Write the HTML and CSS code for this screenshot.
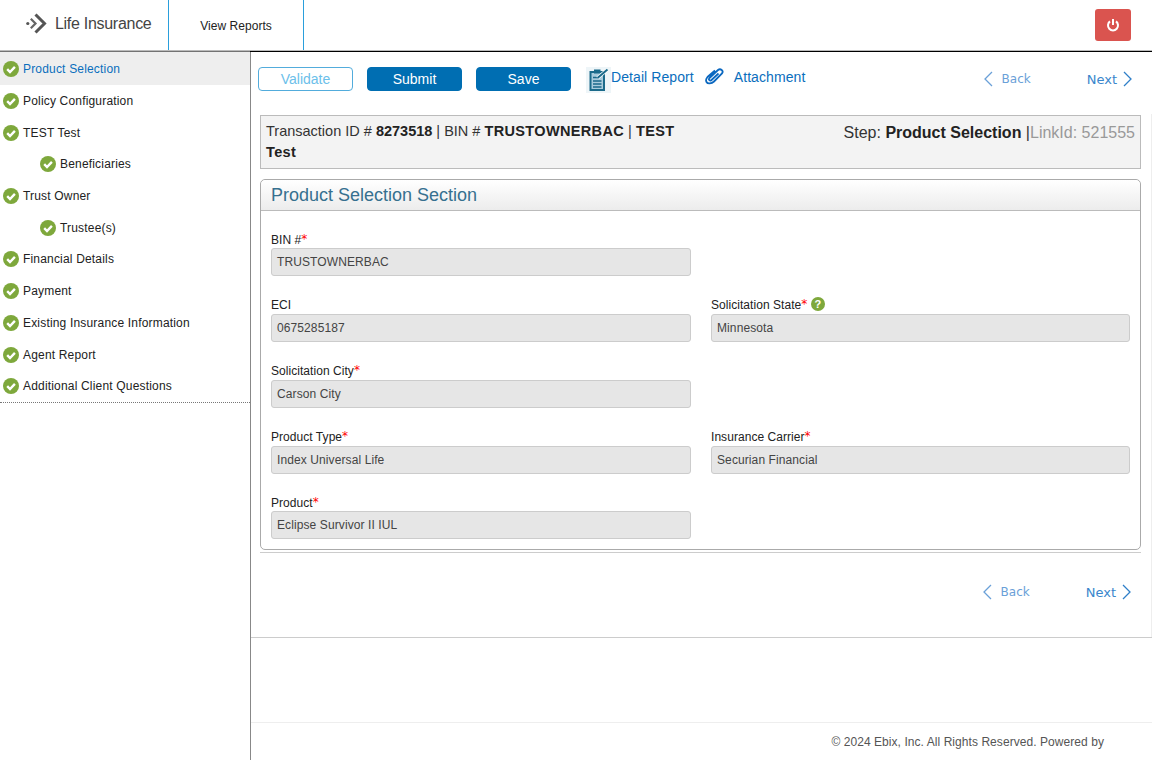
FILE: index.html
```html
<!DOCTYPE html>
<html lang="en">
<head>
    <meta charset="UTF-8">
    <title>Life Insurance</title>
    <link rel="stylesheet" href="styles.css">
</head>
<body>
    <svg width="0" height="0" class="defs">
        <symbol id="check" viewBox="0 0 16 16">
            <circle cx="8" cy="8" r="8" fill="#7ea83c"/>
            <path d="M4.2 8.2 7 11 11.9 5.9" fill="none" stroke="#fff" stroke-width="2.4"/>
        </symbol>
    </svg>

    <header class="topbar">
        <div class="logo">
            <svg width="24" height="24" viewBox="0 0 24 24">
                <circle cx="2.800" cy="11.500" r="1.600" fill="#555"/>
                <path d="M5.800 6.800 10.500 11.500 5.800 16.200" fill="none" stroke="#666" stroke-width="2.200"/>
                <path d="M10.500 2.500 19.500 11.500 10.500 20.500" fill="none" stroke="#555" stroke-width="3"/>
            </svg>
            <span>Life Insurance</span>
        </div>
        <div class="top-link">View Reports</div>
        <button class="power">
            <svg width="14" height="14" viewBox="0 0 14 14">
                <path d="M4 3.4a5 5 0 1 0 6 0" fill="none" stroke="#fff" stroke-width="2"/>
                <path d="M7 1v6" stroke="#fff" stroke-width="2"/>
            </svg>
        </button>
    </header>

    <div class="layout">
        <nav class="sidebar">
            <ul class="steps">
                <li class="step active"><svg class="tick"><use href="#check"/></svg>Product Selection</li>
                <li class="step"><svg class="tick"><use href="#check"/></svg>Policy Configuration</li>
                <li class="step"><svg class="tick"><use href="#check"/></svg>TEST Test</li>
                <li class="step sub"><svg class="tick"><use href="#check"/></svg>Beneficiaries</li>
                <li class="step"><svg class="tick"><use href="#check"/></svg>Trust Owner</li>
                <li class="step sub"><svg class="tick"><use href="#check"/></svg>Trustee(s)</li>
                <li class="step"><svg class="tick"><use href="#check"/></svg>Financial Details</li>
                <li class="step"><svg class="tick"><use href="#check"/></svg>Payment</li>
                <li class="step"><svg class="tick"><use href="#check"/></svg>Existing Insurance Information</li>
                <li class="step"><svg class="tick"><use href="#check"/></svg>Agent Report</li>
                <li class="step"><svg class="tick"><use href="#check"/></svg>Additional Client Questions</li>
            </ul>
        </nav>

        <main class="main">
            <div class="content">
                <div class="toolbar">
                    <button class="btn btn-outline">Validate</button>
                    <button class="btn">Submit</button>
                    <button class="btn">Save</button>
                    <a class="tool-link report">
                        <svg width="25" height="26" viewBox="0 0 25 26" class="tool-icon">
                            <rect width="25" height="26" fill="#eef5f8"/>
                            <rect x="4.500" y="5" width="13.500" height="18" fill="#a9cbdc" stroke="#1b6a8a" stroke-width="2"/>
                            <rect x="8" y="2.500" width="6.500" height="4" fill="#1b6a8a"/>
                            <path d="M7 10.500h6M7 14h8.500M7 17h8.500M7 20h8.500" stroke="#1b6a8a" stroke-width="1.500"/>
                            <path d="M11.500 11 21.500 2.500" stroke="#fff" stroke-width="3.500"/>
                            <path d="M11.500 11 21.500 2.500" stroke="#1b6a8a" stroke-width="2"/>
                        </svg>
                        Detail Report
                    </a>
                    <a class="tool-link attach">
                        <svg width="20" height="20" viewBox="0 0 20 20" class="clip">
                            <path d="M13.500 6.500 6.500 13c-1.500 1.400-3.500-.3-2-2L13 3c2.500-2 6 .8 4 3.500L9 14.500c-2.500 2.500-6.500 2.500-7.500.5-.8-1.500-.3-3.500 1-5L10 3.500" fill="none" stroke="#0b68c0" stroke-width="1.800"/>
                        </svg>
                        Attachment
                    </a>
                    <div class="pager pager-top">
                        <span class="back">
                            <svg width="10" height="16" viewBox="0 0 10 16"><path d="M9 1 2 8l7 7" fill="none" stroke="#6aa0d8" stroke-width="1.300"/></svg>
                            Back
                        </span>
                        <span class="next">
                            Next
                            <svg width="10" height="16" viewBox="0 0 10 16"><path d="M1 1l7 7-7 7" fill="none" stroke="#2f7fc8" stroke-width="1.300"/></svg>
                        </span>
                    </div>
                </div>

                <div class="info-box">
                    <div class="info-left"><span>Transaction ID #</span> <b>8273518</b> <span>| BIN #</span> <b class="wide">TRUSTOWNERBAC</b> <span>|</span> <b class="wide">TEST</b> <b class="wide">Test</b></div>
                    <div class="info-right">Step: <b>Product Selection</b> |<span class="link-id">LinkId: 521555</span></div>
                </div>

                <section class="panel">
                    <h2 class="panel-title">Product Selection Section</h2>
                    <div class="form-grid">
                        <div class="field">
                            <label>BIN #<i>*</i></label>
                            <div class="input">TRUSTOWNERBAC</div>
                        </div>
                        <div class="field"></div>
                        <div class="field">
                            <label>ECI</label>
                            <div class="input">0675285187</div>
                        </div>
                        <div class="field">
                            <label>Solicitation State<i>*</i>
                                <svg width="14" height="14" viewBox="0 0 14 14" class="help">
                                    <circle cx="7" cy="7" r="7" fill="#7ea83c"/>
                                    <text x="7" y="11" text-anchor="middle" class="help-mark">?</text>
                                </svg>
                            </label>
                            <div class="input">Minnesota</div>
                        </div>
                        <div class="field">
                            <label>Solicitation City<i>*</i></label>
                            <div class="input">Carson City</div>
                        </div>
                        <div class="field"></div>
                        <div class="field">
                            <label>Product Type<i>*</i></label>
                            <div class="input">Index Universal Life</div>
                        </div>
                        <div class="field">
                            <label>Insurance Carrier<i>*</i></label>
                            <div class="input">Securian Financial</div>
                        </div>
                        <div class="field">
                            <label>Product<i>*</i></label>
                            <div class="input">Eclipse Survivor II IUL</div>
                        </div>
                    </div>
                </section>
                <div class="panel-rule"></div>

                <div class="pager pager-bottom">
                    <span class="back">
                        <svg width="10" height="16" viewBox="0 0 10 16"><path d="M9 1 2 8l7 7" fill="none" stroke="#6aa0d8" stroke-width="1.300"/></svg>
                        Back
                    </span>
                    <span class="next">
                        Next
                        <svg width="10" height="16" viewBox="0 0 10 16"><path d="M1 1l7 7-7 7" fill="none" stroke="#2f7fc8" stroke-width="1.300"/></svg>
                    </span>
                </div>
            </div>

            <footer class="footer">© 2024 Ebix, Inc. All Rights Reserved. Powered by</footer>
        </main>
    </div>
</body>
</html>
```

FILE: styles.css
```css
* {
    box-sizing: border-box;
}
html, body {
    margin: 0;
    height: 760px;
    overflow: hidden;
}
body {
    font-family: "Liberation Sans", Arial, sans-serif;
    font-size: 12px;
    color: #222;
    background-color: #fff;
}
.defs {
    position: absolute;
}

/* Top bar */
.topbar {
    display: flex;
    height: 52px;
    border-bottom: 1px solid #000;
    box-shadow: inset 0 -1px 0 #bbb;
}
.logo {
    width: 169px;
    height: 50px;
    display: flex;
    align-items: center;
    padding: 0 0 3px 25px;
    gap: 6px;
    border-right: 1px solid #2a9fdc;
    font-size: 16px;
    letter-spacing: -0.29px;
    color: #444;
}
.top-link {
    width: 135px;
    height: 50px;
    display: flex;
    align-items: center;
    justify-content: center;
    padding-top: 2px;
    border-right: 1px solid #2a9fdc;
    letter-spacing: 0.05px;
    color: #222;
}
.power {
    margin: 9px 21px 0 auto;
    width: 36px;
    height: 32px;
    border: none;
    border-radius: 3px;
    background-color: #da544f;
    display: flex;
    align-items: center;
    justify-content: center;
}

/* Sidebar */
.layout {
    display: flex;
    height: 708px;
}
.sidebar {
    width: 251px;
    flex: none;
    border-right: 1px solid #888;
}
.steps {
    list-style: none;
    margin: 0;
    padding: 1.48px 0 0;
    border-bottom: 1px dotted #777;
}
.step {
    height: 31.7px;
    display: flex;
    align-items: center;
    gap: 4px;
    padding-left: 3px;
    letter-spacing: 0.18px;
    color: #222;
}
.step.sub {
    padding-left: 40px;
}
.step.active {
    background-color: #eee;
    box-shadow: 0 -1.48px 0 #eee;
    color: #0a6ebd;
}
.tick {
    width: 16px;
    height: 16px;
    flex: none;
}

/* Main */
.main {
    flex: 1;
    min-width: 0;
}
.content {
    height: 586px;
    border-bottom: 1px solid #ccc;
    position: relative;
}
.content::after {
    content: "";
    position: absolute;
    right: 0;
    top: 62px;
    bottom: 0;
    border-right: 1px solid #eee;
}
.toolbar {
    height: 63px;
    display: flex;
    align-items: flex-start;
    padding: 15px 19px 0 7px;
}
.btn {
    width: 95px;
    height: 24px;
    margin-right: 14px;
    border: 1px solid #006eb2;
    border-radius: 4px;
    background-color: #006eb2;
    color: #fff;
    font-family: inherit;
    font-size: 14px;
}
.btn-outline {
    background-color: #fff;
    border-color: #52acdc;
    color: #6cc0ea;
}
.tool-link {
    display: flex;
    color: #0a6ebd;
    font-size: 14px;
    letter-spacing: 0.08px;
    line-height: 20px;
}
.report {
    margin-left: 1px;
}
.tool-icon {
    flex: none;
}
.attach {
    margin-left: 11px;
    gap: 9px;
}
.pager {
    display: flex;
    align-items: center;
    font-family: "DejaVu Sans", sans-serif;
}
.pager span {
    display: flex;
    align-items: center;
}
.pager-top {
    margin-left: auto;
    margin-top: 4px;
}
.pager-bottom {
    justify-content: flex-end;
    margin-top: 31px;
    padding-right: 20px;
}
.back {
    font-size: 12px;
    color: #6aa0d8;
    gap: 9px;
}
.next {
    font-size: 13px;
    color: #3a86cc;
    margin-left: 56px;
    gap: 6px;
}

/* Transaction strip */
.info-box {
    margin-left: 9px;
    width: 881px;
    height: 54px;
    padding: 5px 5px 0;
    background-color: #f3f3f3;
    border: 1px solid #bbb;
    display: flex;
    justify-content: space-between;
    font-size: 14.5px;
    line-height: 21px;
    color: #333;
}
.info-left {
    width: 420px;
}
.info-left b {
    color: #222;
}
.wide {
    letter-spacing: 0.35px;
}
.info-right {
    margin-top: 1px;
    font-size: 16px;
    line-height: 21px;
}
.info-right b {
    color: #222;
}
.link-id {
    color: #999;
}

/* Section panel */
.panel {
    margin: 10px 0 0 9px;
    width: 881px;
    height: 371px;
    border: 1px solid #aaa;
    border-radius: 5px;
}
.panel-title {
    margin: 0;
    height: 31px;
    padding-left: 10px;
    line-height: 30px;
    font-size: 18px;
    font-weight: normal;
    color: #36708f;
    border-bottom: 1px solid #bbb;
    border-radius: 5px 5px 0 0;
    background: linear-gradient(#fff, #ececec);
}
.form-grid {
    display: grid;
    grid-template-columns: 420px 419px;
    column-gap: 20px;
    grid-auto-rows: 65.85px;
    padding: 20px 10px 0;
}
.field label {
    display: flex;
    align-items: center;
    height: 16px;
    padding-top: 1px;
    letter-spacing: 0.05px;
    color: #222;
}
.field label i {
    font-family: "DejaVu Sans", sans-serif;
    font-style: normal;
    font-size: 12px;
    line-height: 10px;
    height: 12px;
    color: #f00;
}
.help {
    margin-left: 4px;
    margin-top: -2px;
}
.help-mark {
    font-size: 11px;
    font-weight: bold;
    fill: #fff;
}
.input {
    height: 28px;
    margin-top: 1px;
    padding-left: 5px;
    background-color: #e6e6e6;
    border: 1px solid #ccc;
    border-radius: 3px;
    line-height: 26px;
    letter-spacing: 0.1px;
    color: #444;
}
.panel-rule {
    margin: 2px 0 0 9px;
    width: 881px;
    border-top: 1px solid #ccc;
}

/* Footer */
.footer {
    margin-top: 84px;
    height: 38px;
    border-top: 1px solid #eee;
    padding: 12px 48px 0 0;
    text-align: right;
    letter-spacing: 0.06px;
    color: #555;
}
```
